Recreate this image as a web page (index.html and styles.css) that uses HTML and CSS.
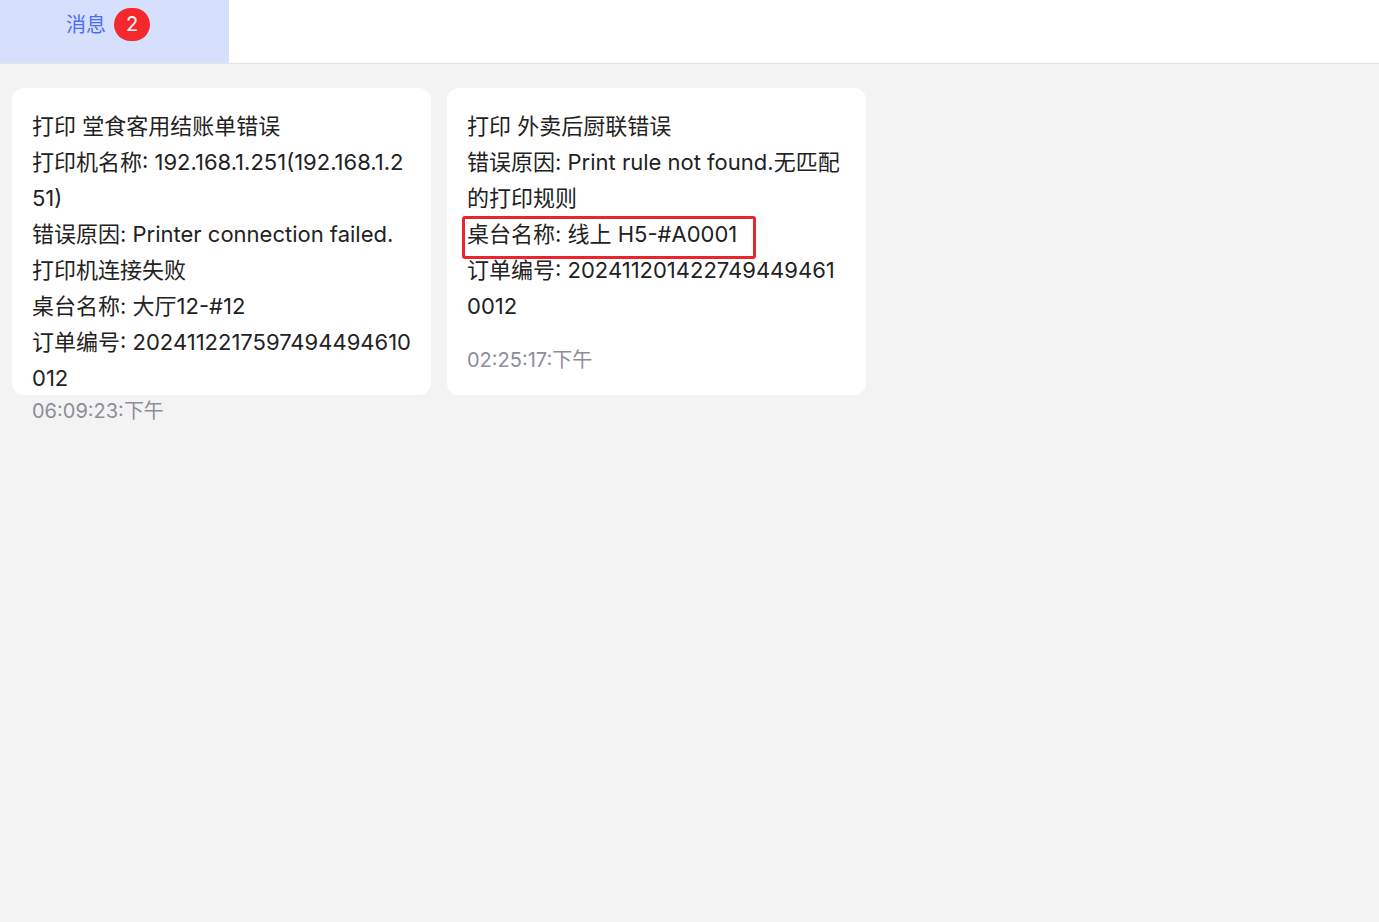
FILE: index.html
```html
<!DOCTYPE html>
<html lang="zh-CN">
<head>
    <meta charset="UTF-8">
    <meta name="viewport" content="width=device-width, initial-scale=1.0">
    <title>消息</title>
    <link rel="stylesheet" href="styles.css">
</head>
<body>
    <!-- Kopfzeile mit Tab -->
    <div class="topbar">
        <div class="tab">
            <span class="tab-label">消息</span>
            <span class="badge">2</span>
        </div>
    </div>

    <!-- Nachrichten -->
    <div class="list">
        <div class="card">
            <div class="card-body">
                <div>打印 堂食客用结账单错误</div>
                <div>打印机名称: 192.168.1.251(192.168.1.251)</div>
                <div>错误原因: Printer connection failed.打印机连接失败</div>
                <div>桌台名称: 大厅12-#12</div>
                <div>订单编号: 2024112217597494494610012</div>
            </div>
            <div class="time">06:09:23:下午</div>
        </div>
        <div class="card">
            <div class="card-body">
                <div>打印 外卖后厨联错误</div>
                <div>错误原因: Print rule not found.无匹配的打印规则</div>
                <div>桌台名称: 线上 H5-#A0001</div>
                <div>订单编号: 2024112014227494494610012</div>
            </div>
            <div class="time">02:25:17:下午</div>
            <div class="mark"></div>
        </div>
    </div>
</body>
</html>
```

FILE: styles.css
```css
body {
    margin: 0;
    font-family: Inter, "Noto Sans CJK SC", sans-serif;
    background-color: #f3f3f3;
    color: #222222;
    height: 100vh;
}

.topbar {
    height: 63px;
    background-color: #ffffff;
    border-bottom: 1px solid #e4e4e4;
    display: flex;
}

.tab {
    width: 229px;
    background-color: #d6e0fd;
    display: flex;
    align-items: flex-start;
    gap: 8px;
    padding: 8px 0 0 66px;
    box-sizing: border-box;
}

.tab-label {
    font-size: 20px;
    line-height: 33px;
    margin-top: 1px;
    color: #4c6ef0;
}

.badge {
    min-width: 36px;
    height: 33px;
    border-radius: 17px;
    background-color: #f5282d;
    color: #ffffff;
    font-size: 20px;
    line-height: 33px;
    text-align: center;
}

.list {
    display: flex;
    align-items: flex-start;
    gap: 16px;
    padding: 24px 12px;
}

.card {
    position: relative;
    width: 419px;
    height: 307px;
    box-sizing: border-box;
    padding: 20px 20px;
    background-color: #ffffff;
    border-radius: 12px;
    display: flex;
    flex-direction: column;
}

.card-body {
    font-size: 22px;
    line-height: 36px;
    word-break: break-all;
}

.time {
    margin-top: auto;
    font-size: 20px;
    line-height: 30px;
    color: #8d8d9b;
    flex-shrink: 0;
}

/* rote Markierung */
.mark {
    position: absolute;
    left: 15px;
    top: 128px;
    width: 294px;
    height: 43px;
    box-sizing: border-box;
    border: 3px solid #e8262b;
    border-radius: 3px;
}
```
